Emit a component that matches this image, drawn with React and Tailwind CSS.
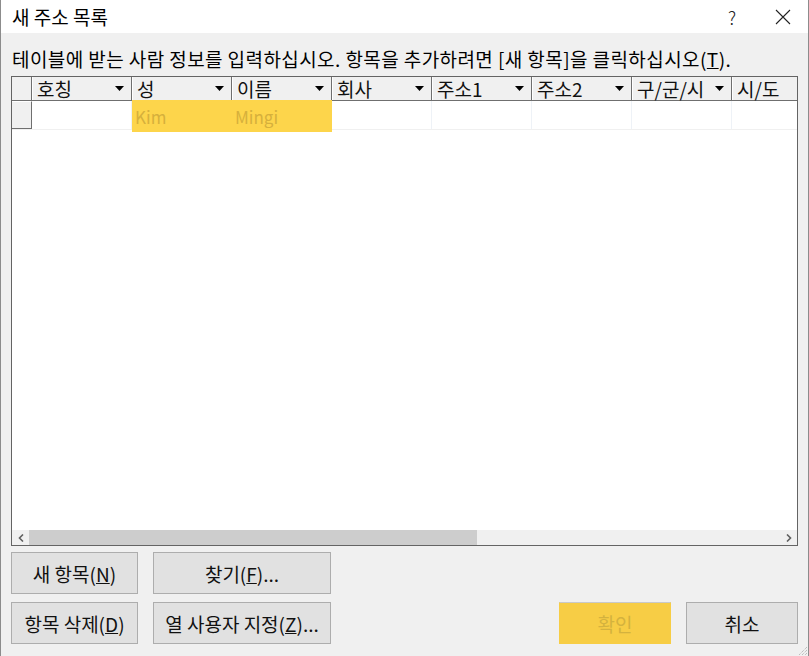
import React from 'react';

const columns = ['호칭', '성', '이름', '회사', '주소1', '주소2', '구/군/시', '시/도'];

function Arrow() {
  return (
    <svg width="9" height="5" viewBox="0 0 9 5" className="shrink-0">
      <path d="M0 0 H9 L4.5 5 Z" fill="#000" />
    </svg>
  );
}

function HeaderCell({ label, last }) {
  return (
    <div className="w-[100px] shrink-0 h-full flex items-center justify-between pl-[4px] pr-[7px] border-r border-[#6f6f6f] border-l border-l-white">
      <span className="text-[19px] leading-none text-[#111] whitespace-nowrap">{label}</span>
      {!last && <Arrow />}
    </div>
  );
}

function Btn({ children, className = '' }) {
  return (
    <button className={`h-[42px] border border-[#adadad] bg-[#e1e1e1] text-[19px] leading-none text-[#111] flex items-center justify-center whitespace-nowrap ${className}`}>
      {children}
    </button>
  );
}

export default function App() {
  return (
    <div className="w-[809px] h-[656px] bg-[#f0f0f0] border-l border-r border-[#8c8c8c] font-['Noto_Sans_CJK_KR',sans-serif] flex flex-col overflow-hidden">
      {/* title bar */}
      <div className="h-[33px] shrink-0 bg-white flex items-center pl-[11px]">
        <span className="text-[19px] leading-none text-black">새 주소 목록</span>
        <span className="ml-auto mr-[39px] text-[18px] leading-none text-[#222] font-light">?</span>
        <svg width="16" height="16" viewBox="0 0 16 16" className="mr-[17px]">
          <path d="M1 1 L15 15 M15 1 L1 15" stroke="#222" strokeWidth="1.1" />
        </svg>
      </div>

      <div className="flex-1 flex flex-col px-[10px]">
        <p className="mt-[15px] ml-[1px] text-[19px] tracking-[0.42px] leading-[22px] text-black whitespace-nowrap">
          테이블에 받는 사람 정보를 입력하십시오. 항목을 추가하려면 [새 항목]을 클릭하십시오(<u>T</u>).
        </p>

        {/* grid */}
        <div className="mt-[6px] h-[470px] border border-[#646464] bg-white flex flex-col overflow-hidden">
          <div className="h-[24px] shrink-0 flex bg-[#f0f0f0] border-b border-[#6f6f6f]">
            <div className="w-[20px] shrink-0 h-full border-r border-[#6f6f6f]" />
            {columns.map((c, i) => (
              <HeaderCell key={c} label={c} last={i === columns.length - 1} />
            ))}
          </div>

          <div className="h-[29px] shrink-0 flex border-b border-[#f0f0f0]">
            <div className="w-[20px] shrink-0 h-full bg-[#f0f0f0] border-r border-b border-[#6f6f6f] border-t border-t-white" />
            {columns.map((c, i) => {
              const value = i === 1 ? 'Kim' : i === 2 ? 'Mingi' : '';
              const hl = i === 1 || i === 2;
              return (
                <div
                  key={c}
                  className={`w-[100px] shrink-0 flex items-center pl-[3px] border-r ${hl ? 'bg-[#fdd54b] border-[#fdd54b] -mt-[1px] h-[32px]' : 'h-full border-[#eef2f7]'}`}
                >
                  <span className="text-[17px] leading-none text-[#d6b03c]">{value}</span>
                </div>
              );
            })}
          </div>

          <div className="flex-1" />

          {/* horizontal scrollbar */}
          <div className="h-[15px] shrink-0 flex items-center bg-[#f0f0f0]">
            <div className="w-[17px] h-full flex items-center justify-center">
              <svg width="6" height="8" viewBox="0 0 6 8">
                <path d="M5 0.5 L1.5 4 L5 7.5" stroke="#606060" strokeWidth="1.6" fill="none" />
              </svg>
            </div>
            <div className="w-[448px] h-full bg-[#cdcdcd]" />
            <div className="flex-1" />
            <div className="w-[17px] h-full flex items-center justify-center">
              <svg width="6" height="8" viewBox="0 0 6 8">
                <path d="M1 0.5 L4.5 4 L1 7.5" stroke="#606060" strokeWidth="1.6" fill="none" />
              </svg>
            </div>
          </div>
        </div>

        {/* buttons */}
        <div className="mt-[6px] flex flex-col gap-[8px]">
          <div className="flex">
            <Btn className="w-[127px]">새 항목(<u>N</u>)</Btn>
            <Btn className="w-[178px] ml-[15px]">찾기(<u>F</u>)...</Btn>
          </div>
          <div className="flex">
            <Btn className="w-[127px]">항목 삭제(<u>D</u>)</Btn>
            <Btn className="w-[178px] ml-[15px]">열 사용자 지정(<u>Z</u>)...</Btn>
            <Btn className="w-[112px] ml-auto bg-[#f7cd45] border-[#f7cd45] border-t-[#c9c9c9] text-[#d4b23e]">확인</Btn>
            <Btn className="w-[112px] ml-[15px]">취소</Btn>
          </div>
        </div>

        <div className="flex-1 flex justify-end items-end -mr-[10px]">
          <svg width="11" height="11" viewBox="0 0 11 11">
            <path d="M10 2 L2 10 M10 5 L5 10 M10 8 L8 10" stroke="#a8a8a8" strokeWidth="1" strokeDasharray="1 1" />
          </svg>
        </div>
      </div>
    </div>
  );
}
